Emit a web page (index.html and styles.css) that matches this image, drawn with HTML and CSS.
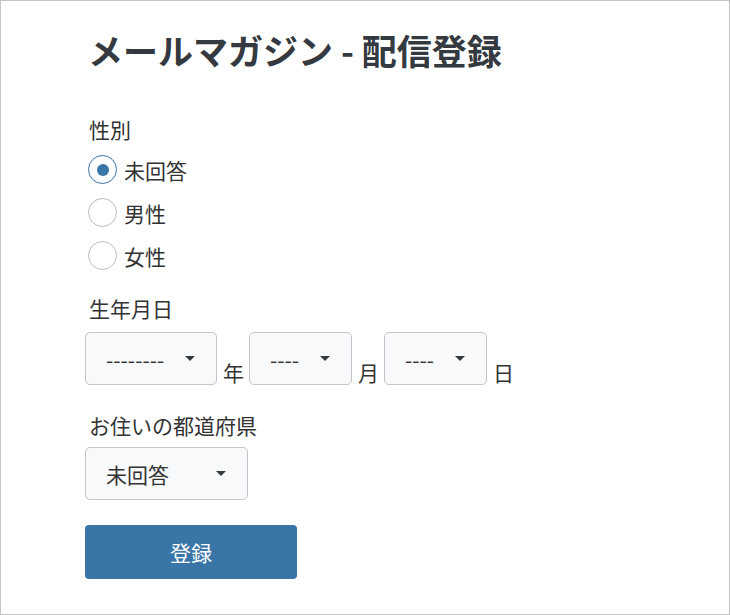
FILE: index.html
```html
<!DOCTYPE html>
<html lang="ja">
<head>
<meta charset="utf-8">
<title>メールマガジン - 配信登録</title>
<link rel="stylesheet" href="styles.css">
</head>
<body>
<div class="page">
  <h1 class="title">メールマガジン - 配信登録</h1>
  <form class="form">
    <div class="field-label">性別</div>
    <div class="radios">
      <label class="radio-row"><input class="radio" type="radio" name="gender" checked><span>未回答</span></label>
      <label class="radio-row"><input class="radio" type="radio" name="gender"><span>男性</span></label>
      <label class="radio-row"><input class="radio" type="radio" name="gender"><span>女性</span></label>
    </div>

    <div class="field-label label-birth">生年月日</div>
    <div class="date-row">
      <div class="select select-year"><select><option>--------</option></select></div>
      <span class="unit">年</span>
      <div class="select select-small"><select><option>----</option></select></div>
      <span class="unit">月</span>
      <div class="select select-small"><select><option>----</option></select></div>
      <span class="unit">日</span>
    </div>

    <div class="field-label label-pref">お住いの都道府県</div>
    <div class="select select-pref"><select><option>未回答</option></select></div>

    <button class="submit" type="button">登録</button>
  </form>
</div>
</body>
</html>
```

FILE: styles.css
```css
html, body {
  margin: 0;
  padding: 0;
  background: #fff;
}

body {
  font-family: "Noto Sans CJK JP", "Noto Sans", sans-serif;
  color: #333;
}

.page {
  box-sizing: border-box;
  width: 730px;
  height: 615px;
  border: 1px solid #c4c4c4;
  padding-left: 84px;
}

.title {
  margin: 28px 0 0 3px;
  font-size: 35px;
  line-height: 42px;
  font-weight: 700;
  color: #343a40;
}

.form {
  display: flex;
  flex-direction: column;
  align-items: flex-start;
}

.field-label {
  font-size: 21px;
  line-height: 28px;
  margin-left: 4px;
  margin-top: 44px;
  margin-bottom: 5px;
}

.label-birth {
  margin-top: 17px;
  margin-bottom: 10px;
}

.label-pref {
  margin-top: 26px;
  margin-bottom: 8px;
}

.radios {
  display: flex;
  flex-direction: column;
}

.radio-row {
  display: flex;
  align-items: center;
  height: 43px;
  font-size: 21px;
  gap: 7px;
  cursor: pointer;
}

.radio {
  appearance: none;
  -webkit-appearance: none;
  box-sizing: border-box;
  width: 29px;
  height: 29px;
  margin: 0 0 0 3px;
  border: 1.5px solid #b7bcc2;
  border-radius: 50%;
  background: #fff;
  display: grid;
  place-items: center;
}

.radio:checked {
  border-color: #3a75a7;
}

.radio:checked::after {
  content: "";
  width: 12px;
  height: 12px;
  border-radius: 50%;
  background: #3a75a7;
}

.date-row {
  display: flex;
  align-items: flex-end;
}

.unit {
  font-size: 21px;
  line-height: 24px;
  margin: 0 5px 0 6px;
  position: relative;
  top: -1px;
}

.select {
  position: relative;
  box-sizing: border-box;
  height: 53px;
  border: 1px solid #c2c6cb;
  border-radius: 5px;
  background: #f8f9fa;
}

.select select {
  appearance: none;
  -webkit-appearance: none;
  width: 100%;
  height: 100%;
  border: 0;
  background: transparent;
  font-family: inherit;
  font-size: 21px;
  color: #333;
  padding: 0 0 0 20px;
  outline: none;
}

.select::after {
  content: "";
  position: absolute;
  right: 21px;
  top: 50%;
  margin-top: -3px;
  border-left: 5px solid transparent;
  border-right: 5px solid transparent;
  border-top: 5px solid #343a40;
  pointer-events: none;
}

.select-year {
  width: 132px;
}

.select-small {
  width: 103px;
}

.select-pref {
  width: 163px;
}

.submit {
  margin-top: 25px;
  width: 212px;
  height: 54px;
  border: 0;
  border-radius: 4px;
  background: #3a75a7;
  color: #fff;
  font-family: inherit;
  font-size: 21px;
  cursor: pointer;
}
```
